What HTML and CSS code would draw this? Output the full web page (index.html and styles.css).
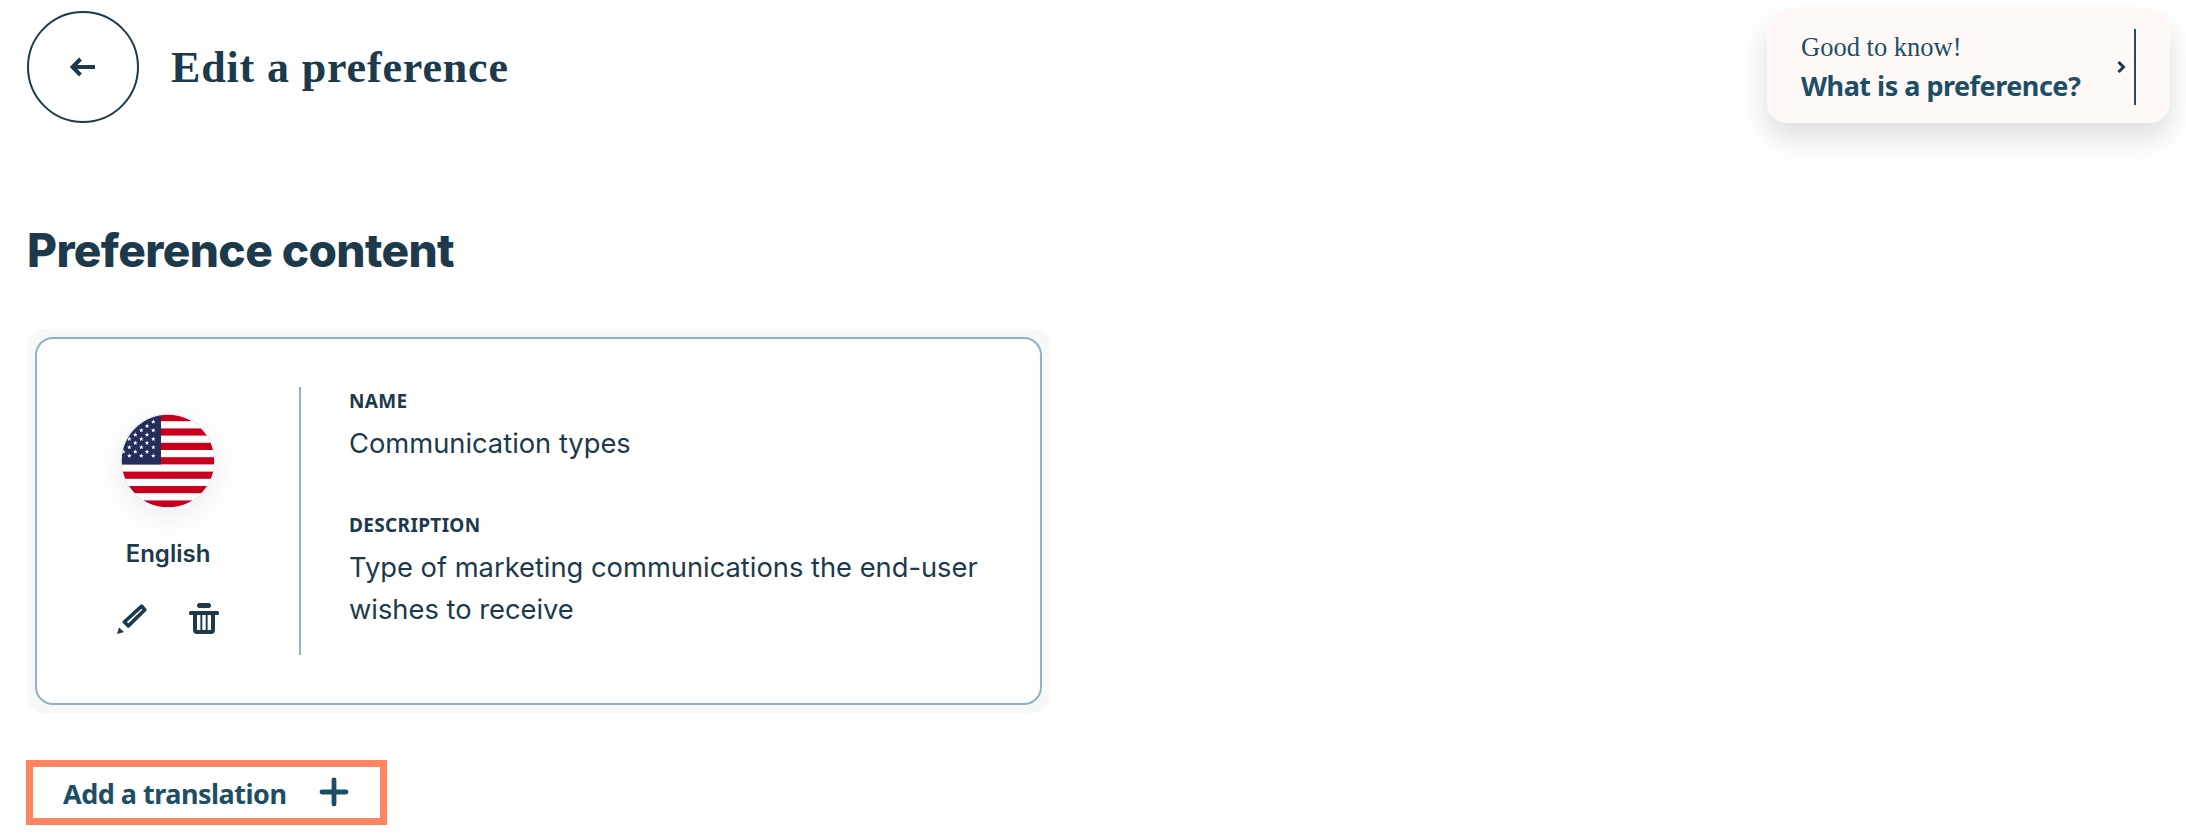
FILE: index.html
```html
<!DOCTYPE html>
<html>
<head>
    <title>Edit a preference</title>
    <link rel="stylesheet" href="styles.css">
</head>
<body>
    <svg class="defs" width="0" height="0">
        <defs>
            <polygon id="star" points="0,-2.4 .6,-.8 2.3,-.8 1,.3 1.4,2 0,1 -1.4,2 -1,.3 -2.3,-.8 -.6,-.8" fill="#fff"/>
        </defs>
    </svg>

    <div class="page">
        <div class="header">
            <a class="back" href="#">
                <svg width="26" height="20" viewBox="0 0 26 20" fill="none" stroke="#1c3a4b" stroke-width="4">
                    <path d="M25 10H3"/>
                    <path d="M10.500 2L2.500 10l8 8"/>
                </svg>
            </a>
            <h1>Edit a preference</h1>
            <a class="hint" href="#">
                <div class="hint-text">
                    <div class="hint-top">Good to know!</div>
                    <div class="hint-main">What is a preference?</div>
                </div>
                <svg class="hint-arrow" width="9" height="12" viewBox="0 0 9 12" fill="none" stroke="#1c3a4b" stroke-width="3">
                    <path d="M1.500 1l5 5-5 5"/>
                </svg>
            </a>
        </div>

        <h2>Preference content</h2>

        <div class="card-wrap">
            <div class="card">
                <div class="lang">
                    <svg class="flag" width="96" height="96" viewBox="-1 -1 96 96">
                        <clipPath id="flagClip"><circle cx="47" cy="47" r="46.500"/></clipPath>
                        <g clip-path="url(#flagClip)">
                            <rect width="94" height="94" fill="#fff"/>
                            <g fill="#c8001e">
                                <rect y="0" width="94" height="7.200"/>
                                <rect y="14.400" width="94" height="7.200"/>
                                <rect y="28.800" width="94" height="7.200"/>
                                <rect y="43.200" width="94" height="7.200"/>
                                <rect y="57.600" width="94" height="7.200"/>
                                <rect y="72" width="94" height="7.200"/>
                                <rect y="86.400" width="94" height="7.600"/>
                            </g>
                            <rect width="40" height="50.400" fill="#252d5c"/>
                            <use href="#star" x="32.300" y="7.700"/>
                            <use href="#star" x="26" y="12"/>
                            <use href="#star" x="20.300" y="16.300"/>
                            <use href="#star" x="32.300" y="16.300"/>
                            <use href="#star" x="14.300" y="20.700"/>
                            <use href="#star" x="26" y="20.700"/>
                            <use href="#star" x="8.300" y="25"/>
                            <use href="#star" x="20.300" y="25"/>
                            <use href="#star" x="32.300" y="25"/>
                            <use href="#star" x="14.300" y="29"/>
                            <use href="#star" x="26" y="29"/>
                            <use href="#star" x="8.300" y="33.300"/>
                            <use href="#star" x="20.300" y="33.300"/>
                            <use href="#star" x="32.300" y="33.300"/>
                            <use href="#star" x="2.300" y="37.700"/>
                            <use href="#star" x="14.300" y="37.700"/>
                            <use href="#star" x="26" y="37.700"/>
                            <use href="#star" x="8.300" y="41.700"/>
                            <use href="#star" x="20.300" y="41.700"/>
                            <use href="#star" x="32.300" y="41.700"/>
                        </g>
                        <circle cx="47" cy="47" r="47" fill="none" stroke="#dfeef7" stroke-width="1.500"/>
                    </svg>
                    <div class="lang-name">English</div>
                    <div class="lang-actions">
                        <svg width="30" height="31" viewBox="0 0 30 31">
                            <path d="M24.700 3.100L27.800 6.800 11.400 22.900 7.300 19z" fill="none" stroke="#1c3a4b" stroke-width="3.600" stroke-linejoin="round"/>
                            <path d="M0 31L2 24.500 7 29z" fill="#1c3a4b"/>
                        </svg>
                        <svg width="30" height="31" viewBox="0 0 30 31" fill="#1c3a4b">
                            <rect x="8" y="0" width="14" height="5" rx="2.500"/>
                            <rect x="0" y="8" width="30" height="4" rx="1.500"/>
                            <path d="M4 11H26V27a4 4 0 0 1-4 4H8a4 4 0 0 1-4-4z"/>
                            <g fill="#fff">
                                <rect x="8" y="12" width="3.400" height="15"/>
                                <rect x="13.300" y="12" width="3.400" height="15"/>
                                <rect x="18.600" y="12" width="3.400" height="15"/>
                            </g>
                        </svg>
                    </div>
                </div>
                <div class="details">
                    <div class="field">
                        <div class="label">NAME</div>
                        <div class="value">Communication types</div>
                    </div>
                    <div class="field">
                        <div class="label">DESCRIPTION</div>
                        <div class="value">Type of marketing communications the end-user wishes to receive</div>
                    </div>
                </div>
            </div>
        </div>

        <a class="add-btn" href="#">
            <span>Add a translation</span>
            <svg width="30" height="30" viewBox="0 0 30 30" fill="none" stroke="#1d4e66" stroke-width="4.800" stroke-linecap="round">
                <path d="M15 3V27"/>
                <path d="M3 15H27"/>
            </svg>
        </a>
    </div>
</body>
</html>
```

FILE: styles.css
```css
body {
    margin: 0;
    background: #fff;
    color: #1c3a4b;
    font-family: Inter, "Liberation Sans", sans-serif;
}
a {
    color: inherit;
    text-decoration: none;
}
.defs {
    display: block;
    height: 0;
}
.page {
    padding: 11px 16px 0 27px;
}

.header {
    display: flex;
    align-items: center;
}
.back {
    width: 112px;
    height: 112px;
    box-sizing: border-box;
    border: 2px solid #1c3a4b;
    border-radius: 50%;
    display: flex;
    align-items: center;
    justify-content: center;
}
h1 {
    margin: 0 0 0 32px;
    font-family: "Liberation Serif", serif;
    font-size: 44px;
    font-weight: 700;
    letter-spacing: 0.85px;
}
.hint {
    margin-left: auto;
    width: 403px;
    height: 112px;
    box-sizing: border-box;
    padding: 18px 34px 18px 34px;
    background: #fef9f7;
    border-radius: 20px;
    box-shadow: 0 14px 30px rgba(0,0,0,0.14);
    display: flex;
    align-items: center;
    color: #1d4e66;
}
.hint-text {
    flex: 1;
}
.hint-top {
    font-family: "Liberation Serif", serif;
    font-size: 26.500px;
    line-height: 37px;
}
.hint-main {
    font-family: "Noto Sans", sans-serif;
    font-size: 27px;
    font-weight: 700;
    letter-spacing: -0.5px;
    line-height: 40px;
}
.hint-arrow {
    margin-right: 8px;
}
.hint::after {
    content: "";
    width: 2px;
    height: 76px;
    background: #1d4e66;
}

h2 {
    margin: 102px 0 54px 0;
    font-size: 46px;
    font-weight: 800;
    letter-spacing: -0.6px;
    line-height: 50px;
}

.card-wrap {
    width: 1023px;
    box-sizing: border-box;
    padding: 8px;
    background: #f7f9f9;
    border-radius: 16px;
}
.card {
    height: 368px;
    box-sizing: border-box;
    padding: 48px 0;
    background: #fff;
    border: 2px solid #8fb3c2;
    border-radius: 18px;
    display: flex;
}
.lang {
    width: 264px;
    flex-shrink: 0;
    box-sizing: border-box;
    padding-top: 26px;
    border-right: 2px solid #8fb3c2;
    display: flex;
    flex-direction: column;
    align-items: center;
}
.flag {
    border-radius: 50%;
    box-shadow: 0 8px 34px rgba(0,0,0,0.08);
}
.lang-name {
    margin-top: 27px;
    font-size: 24px;
    font-weight: 600;
    line-height: 36px;
}
.lang-actions {
    margin-top: 31px;
    display: flex;
    gap: 42px;
}
.details {
    padding: 1px 0 0 48px;
}
.field {
    margin-bottom: 47px;
}
.label {
    font-family: "Noto Sans", sans-serif;
    font-size: 19px;
    font-weight: 700;
    letter-spacing: 0.35px;
    line-height: 26px;
}
.value {
    margin-top: 9px;
    font-size: 27.300px;
    line-height: 42px;
}

.add-btn {
    margin: 47px 0 0 -1px;
    width: 361px;
    height: 65px;
    box-sizing: border-box;
    border: 7px solid #ff8561;
    padding-left: 30px;
    display: flex;
    align-items: center;
    gap: 33px;
    color: #1d4e66;
    font-family: "Noto Sans", sans-serif;
    font-size: 27px;
    font-weight: 700;
    letter-spacing: -0.5px;
}
.add-btn svg {
    margin-bottom: 2px;
}
.add-btn span {
    padding-top: 2px;
}
```
